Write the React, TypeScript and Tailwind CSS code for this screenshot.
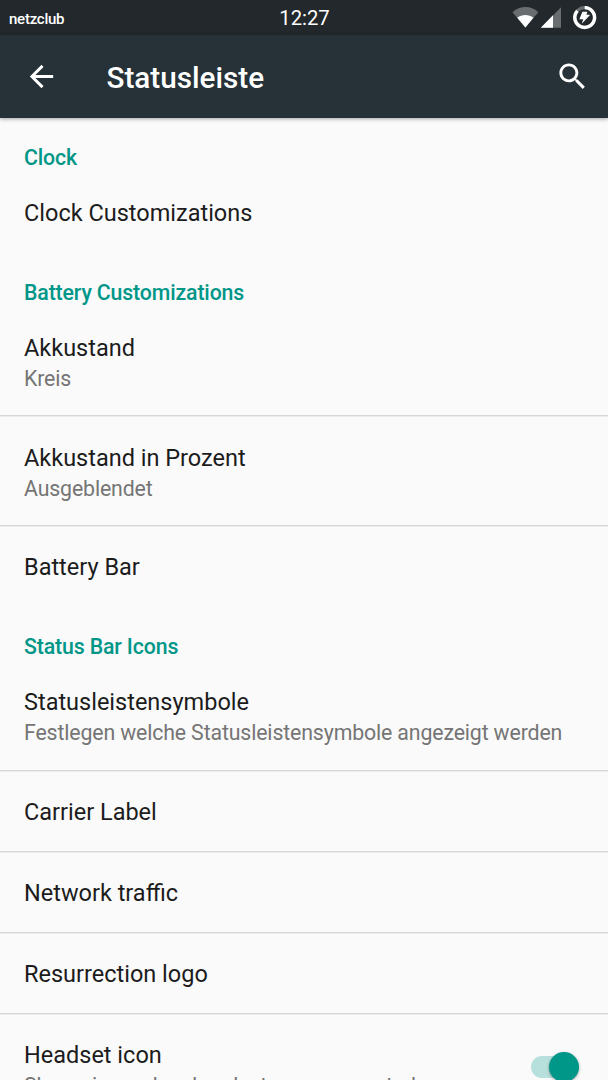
import { useState } from "react"
import clsx from "clsx"

interface Preference {
  title: string
  summary?: string
  hasSwitch?: boolean
}

interface Category {
  name: string
  items: Preference[]
}

const categories: Category[] = [
  {
    name: "Clock",
    items: [{ title: "Clock Customizations" }],
  },
  {
    name: "Battery Customizations",
    items: [
      { title: "Akkustand", summary: "Kreis" },
      { title: "Akkustand in Prozent", summary: "Ausgeblendet" },
      { title: "Battery Bar" },
    ],
  },
  {
    name: "Status Bar Icons",
    items: [
      { title: "Statusleistensymbole", summary: "Festlegen welche Statusleistensymbole angezeigt werden" },
      { title: "Carrier Label" },
      { title: "Network traffic" },
      { title: "Resurrection logo" },
      { title: "Headset icon", summary: "Shows icon when headsets are connected", hasSwitch: true },
    ],
  },
]

function StatusBar() {
  return (
    <div className="grid h-[35px] shrink-0 grid-cols-3 items-center bg-[#22282b] text-white">
      <span className="pl-[9px] pt-[3px] text-[15px] font-medium leading-none tracking-[-0.25px]">netzclub</span>
      <span className="pt-px pl-px text-center text-[20.3px] leading-none">12:27</span>
      <svg className="h-[35px] w-[96px] justify-self-end" viewBox="0 0 96 35" fill="none">
        {/* Wifi */}
        <path d="M0.5 12.2C8.2 5.4 18.8 5.4 26.3 12.2L13.4 27.5Z" fill="#696d6f" />
        <path d="M5.2 17.8C10 14 16.8 14 21.4 17.8L13.4 27.5Z" fill="#fff" />
        {/* Mobile signal */}
        <path d="M49 7.2V27.7H28.8Z" fill="#696d6f" />
        <path d="M41 15.3V27.7H28.8Z" fill="#fff" />
        {/* Battery circle */}
        <circle cx="72.7" cy="17.5" r="9.9" stroke="#696d6f" strokeWidth="3.2" />
        <path d="M72.7 7.6A9.9 9.9 0 1 1 65.4 10.8" stroke="#fff" strokeWidth="3.4" />
        <path d="M70.4 11.7H75.4L74.4 14.8H78.2L69.8 23.8L71.2 19.2H67.4Z" fill="#fff" />
      </svg>
    </div>
  )
}

function Toolbar() {
  return (
    <header className="relative z-10 flex h-[83px] shrink-0 items-center bg-[#263238] pl-6 pr-[18px] text-white shadow-[0_1px_4px_rgba(0,0,0,0.35)]">
      <button aria-label="Back">
        <svg className="h-[35px] w-[35px]" viewBox="0 0 24 24" fill="currentColor">
          <path d="M20 11H7.83l5.59-5.59L12 4l-8 8 8 8 1.41-1.41L7.83 13H20v-2z" />
        </svg>
      </button>
      <h1 className="ml-[47.5px] flex-1 pt-[2px] text-[29.7px] font-medium leading-none">Statusleiste</h1>
      <button aria-label="Search">
        <svg className="h-[35px] w-[35px]" viewBox="0 0 24 24" fill="currentColor">
          <path d="M15.5 14h-.79l-.28-.27C15.41 12.59 16 11.11 16 9.5 16 5.91 13.09 3 9.5 3S3 5.91 3 9.5 5.91 16 9.5 16c1.61 0 3.09-.59 4.23-1.57l.27.28v.79l5 4.99L20.49 19l-4.99-5zm-6 0C7.01 14 5 11.99 5 9.5S7.01 5 9.5 5 14 7.01 14 9.5 11.99 14 9.5 14z" />
        </svg>
      </button>
    </header>
  )
}

function PreferenceRow({ item, divider }: { item: Preference; divider: boolean }) {
  const [checked, setChecked] = useState(true)

  return (
    <div
      className={clsx(
        "flex items-center justify-between border-t px-6",
        item.summary ? "h-[109.7px] pt-[3.6px]" : "h-[81px] pt-[2.6px]",
        divider ? "border-[#d6d6d6] shadow-[inset_0_1px_0_#ececec]" : "border-transparent"
      )}
    >
      <div className="whitespace-nowrap">
        <div className="text-[23.5px] leading-[32px] text-[#1c1c1c]">{item.title}</div>
        {item.summary && (
          <div className="text-[21.3px] leading-[30px] tracking-[-0.14px] text-[#757575]">{item.summary}</div>
        )}
      </div>
      {item.hasSwitch && (
        <button
          role="switch"
          aria-checked={checked}
          aria-label={item.title}
          onClick={() => setChecked(!checked)}
          className={clsx(
            "-mt-[5px] mr-[5px] flex h-[22px] w-[48px] items-center rounded-full",
            checked ? "justify-end bg-[#b7dfdb]" : "justify-start bg-[#b9b9b9]"
          )}
        >
          <span
            className={clsx(
              "h-[30px] w-[30px] shrink-0 rounded-full shadow-[0_1px_3px_rgba(0,0,0,0.35)]",
              checked ? "bg-[#009688]" : "bg-[#f1f1f1]"
            )}
          />
        </button>
      )}
    </div>
  )
}

export default function App() {
  return (
    <div className="flex h-[1080px] w-[608px] flex-col overflow-hidden bg-[#fafafa] font-[Roboto,sans-serif]">
      <StatusBar />
      <Toolbar />
      <main className="-mt-[1.3px] flex min-h-0 flex-1 flex-col overflow-hidden">
        {categories.map((category) => (
          <section key={category.name} className="shrink-0">
            <h2 className="h-[54px] pt-[26.8px] pl-6 text-[21.3px] font-medium leading-[28px] tracking-[-0.14px] text-[#009688]">
              {category.name}
            </h2>
            {category.items.map((item, i) => (
              <PreferenceRow key={item.title} item={item} divider={i > 0} />
            ))}
          </section>
        ))}
      </main>
    </div>
  )
}
